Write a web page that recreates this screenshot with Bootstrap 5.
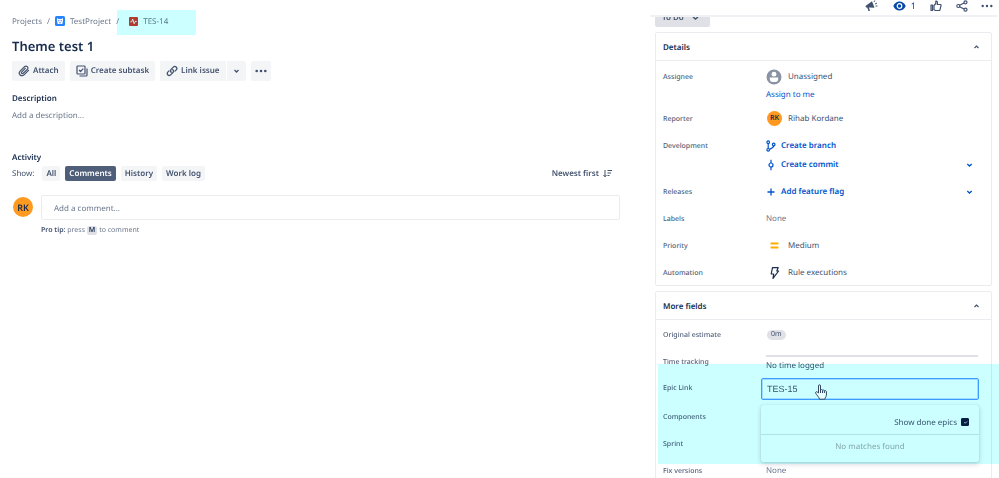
<!DOCTYPE html>
<html lang="en">
<head>
<meta charset="utf-8">
<meta name="viewport" content="width=device-width, initial-scale=1">
<title>TES-14 Theme test 1</title>
<link rel="stylesheet" href="https://cdn.jsdelivr.net/npm/bootstrap@5.3.0/dist/css/bootstrap.min.css">
<style>
  :root { --ink: #172b4d; --mid: #42526e; --soft: #6b778c; --blue: #0052cc; --line: #ebecf0; --tint: #ccffff; }
  body { font-family: "Noto Sans", "Open Sans", sans-serif; font-size: 8px; line-height: 15px; color: var(--mid); text-rendering: geometricPrecision; }
  button, input { text-rendering: inherit; }
  svg { display: block; flex: none; }
  a { color: inherit; text-decoration: none; }
  a:hover { text-decoration: underline; }
  .issue-main { padding: 11px 30px 12px 12px; min-width: 0; }
  .issue-side { flex: 0 0 349px; min-width: 0; }
  .crumbs { gap: 5px; height: 20px; color: var(--soft); }
  .crumbs a { gap: 5px; }
  .crumb-current { position: relative; padding-left: 5px; }
  .tint { position: absolute; background: var(--tint); mix-blend-mode: multiply; pointer-events: none; }
  .tint-crumb { left: -7px; top: -4px; width: 79px; height: 25px; }
  .issue-title { font-size: 13px; line-height: 20px; font-weight: 600; color: var(--ink); margin: 5px 0; }
  .tool { --bs-btn-font-size: 8px; --bs-btn-line-height: 20px; --bs-btn-padding-y: 0; --bs-btn-padding-x: 6px; --bs-btn-border-width: 0; --bs-btn-border-radius: 2px;
    --bs-btn-bg: #f4f5f7; --bs-btn-color: var(--mid); --bs-btn-hover-bg: #ebecf0; --bs-btn-hover-color: var(--mid);
    font-weight: 600; height: 20px; display: inline-flex; align-items: center; gap: 3px; }
  .pill { --bs-btn-line-height: 15px; --bs-btn-padding-x: 4px; height: 15px; }
  .pill-on { --bs-btn-bg: #505f79; --bs-btn-color: #fff; --bs-btn-hover-bg: #42526e; --bs-btn-hover-color: #fff; }
  .section-name { font-size: 8px; line-height: 15px; font-weight: 600; color: var(--ink); margin: 0; }
  .avatar { border-radius: 50%; background: #ff991f; color: var(--ink); font-weight: 600; display: flex; align-items: center; justify-content: center; flex: none; }
  .avatar-l { width: 20px; height: 20px; font-size: 9px; }
  .avatar-s { width: 15px; height: 15px; font-size: 7px; }
  .comment-box { font-size: 8px; line-height: 15px; height: 25px; padding: 5px 12px 3px; border-color: var(--line); border-radius: 2px; }
  .comment-box::placeholder { color: var(--soft); }
  .tip { font-size: 7px; color: var(--soft); }
  .tip b { font-weight: 600; color: var(--mid); }
  .tip kbd { background: #dfe1e6; color: var(--ink); font: inherit; font-weight: 600; line-height: 10px; padding: 0 2px; border-radius: 2px; }
  .icon-bar { height: 17px; margin-right: 2px; padding: 0 4px 4px 0; border-bottom: 2px solid #f0f1f4; color: var(--mid); }
  .plain { border: 0; background: none; padding: 0; color: inherit; font-weight: inherit; display: inline-flex; align-items: center; }
  .watch { gap: 5px; margin-right: 14px; color: #0747a6; font-size: 9px; }
  .side-scroll { overflow: hidden; padding: 0 7px 0 5px; flex: 1; min-height: 0; }
  .status { --bs-btn-bg: #dfe1e6; margin-top: -10px; gap: 8px; padding: 2px 11px 0 7px; flex: none; }
  .panel { --bs-card-border-color: var(--line); --bs-card-border-radius: 2px; margin-top: 5px; color: inherit; flex: none; }
  .panel-head { height: 28px; padding: 1px 11px 0 7px; border-bottom: 1px solid var(--line); }
  .panel-body { padding: 1px 12px 0 7px; }
  .field { padding: 4px 0; display: flex; line-height: 19px; min-height: 27px; }
  .field-first { padding: 5px 0 3px; }
  .field-name { flex: 0 0 103px; height: 19px; padding-top: 1px; font-size: 7px; font-weight: 500; color: #505f79; }
  .field-value { flex: 1; min-width: 0; }
  .line { display: flex; align-items: center; height: 19px; }
  .line-short { height: 16px; }
  .dev { color: var(--blue); font-weight: 600; gap: 5px; }
  .estimate { background: #dfe1e6; border-radius: 8px; padding: 0 4px; font-size: 7px; line-height: 10px; margin-left: 1px; }
  .track { height: 2px; background: #dfe1e6; margin: 3px 1px 0 0; }
  .time-field { height: 27px; }
  .epic-field { height: 28px; padding: 3px 0; }
  .epic { position: relative; margin-left: -5px; }
  .epic-input { height: 22px; padding: 0 5px; font: 9px/18px "Liberation Sans", Arial, sans-serif; border: 1px solid #4c9aff; box-shadow: inset 0 0 0 1px #4c9aff55; border-radius: 2px; color: var(--mid); }
  .epic-input:focus { border-color: #4c9aff; box-shadow: none; color: var(--mid); }
  .epic-menu { position: absolute; z-index: 2; left: 0; right: 0; top: 27px; background: #fff; border-radius: 2px; box-shadow: 0 0 1px #091e4240, 0 2px 5px #091e4233; }
  .epic-opt { height: 30px; padding: 5px 10px 0 0; border-bottom: 1px solid #dfe1e6; gap: 4px; }
  .epic-opt input { width: 8px; height: 8px; margin: 0; border-color: #091e42; }
  .epic-opt input[type=checkbox] { border-radius: 1px; }
  .epic-opt input:checked { background-color: #091e42; border-color: #091e42; background-size: 5px; }
  .epic-none { height: 27px; line-height: 24px; color: #a5a5a8; }
  .tint-side { z-index: 3; left: 2px; right: -8px; top: 72px; height: 100px; }
  .pointer { position: absolute; z-index: 4; left: 54px; top: 6px; }
</style>
<script src="https://cdn.jsdelivr.net/npm/bootstrap@5.3.0/dist/js/bootstrap.bundle.min.js"></script>
</head>
<body>
<div class="d-flex vh-100 overflow-hidden">
  <main class="issue-main flex-grow-1">
    <nav class="crumbs d-flex align-items-center" aria-label="Breadcrumb">
      <a href="#">Projects</a><span>/</span>
      <a href="#" class="d-flex align-items-center">
        <svg width="10" height="10" viewBox="0 0 10 10"><rect width="10" height="10" rx="1.5" fill="#2684ff"/><path d="M2 2l1.500 1h3L8 2v2.500L7.300 8H2.700L2 4.500z" fill="#fff"/><path d="M3.300 4.300h1v1h-1zM5.700 4.300h1v1h-1zM4.200 6.500h1.600v.7H4.200z" fill="#0052cc"/></svg>TestProject</a>
      <span>/</span>
      <span class="crumb-current"><a href="#" class="d-flex align-items-center">
        <svg width="9" height="9" viewBox="0 0 9 9"><rect width="9" height="9" rx="1" fill="#de3b2f"/><path d="M1.300 4.800h1.400l1-2.600 1.500 4.500 1-2.300h1.500" fill="none" stroke="#fff" stroke-width=".9"/></svg>TES-14</a><span class="tint tint-crumb"></span></span>
    </nav>
    <h1 class="issue-title">Theme test 1</h1>
    <div class="d-flex" style="gap:5px">
      <button class="btn tool"><svg width="12" height="12" viewBox="0 0 12 12" fill="none" stroke="currentColor" stroke-width="1.200" stroke-linecap="round"><path d="M10.500 5.300L6 9.900a2.700 2.700 0 0 1-3.900-3.800l4.700-4.600a1.900 1.900 0 0 1 2.700 2.600L5 8.500a1 1 0 0 1-1.400-1.400l3.700-3.700"/></svg>Attach</button>
      <button class="btn tool"><svg width="12" height="12" viewBox="0 0 12 12" fill="none" stroke="currentColor" stroke-width="1.200" stroke-linejoin="round"><rect x="1" y="1" width="8" height="8" rx=".8"/><path d="M3 5l1.500 1.500L7.300 3.600M11 3.500V10a1 1 0 0 1-1 1H3.500"/></svg>Create subtask</button>
      <div class="d-flex" style="gap:1px">
        <button class="btn tool rounded-end-0"><svg width="12" height="12" viewBox="0 0 12 12" fill="none" stroke="currentColor" stroke-width="1.300" stroke-linecap="round"><path d="M5.200 7.300a2 2 0 0 1-.1-2.900L7.300 2.100a2 2 0 0 1 2.900 2.800L9 6.100M6.800 4.700a2 2 0 0 1 .1 2.900L4.700 9.900a2 2 0 0 1-2.900-2.800L3 5.900"/></svg>Link issue</button>
        <button class="btn tool rounded-start-0" aria-label="More link options"><svg width="7" height="6" viewBox="0 0 7 6" fill="none" stroke="currentColor" stroke-width="1.300"><path d="M1.500 2l2 2 2-2"/></svg></button>
      </div>
      <button class="btn tool px-1" aria-label="More actions"><svg width="12" height="4" viewBox="0 0 12 4" fill="currentColor"><circle cx="1.700" cy="2" r="1.300"/><circle cx="6" cy="2" r="1.300"/><circle cx="10.300" cy="2" r="1.300"/></svg></button>
    </div>
    <h2 class="section-name" style="margin-top:10px">Description</h2>
    <p class="mb-0" style="margin-top:2px;color:var(--soft)">Add a description...</p>
    <h2 class="section-name" style="margin-top:27px">Activity</h2>
    <div class="d-flex align-items-center" style="gap:5px;margin-top:1px">
      <span style="margin-right:3px">Show:</span>
      <button class="btn tool pill">All</button>
      <button class="btn tool pill pill-on">Comments</button>
      <button class="btn tool pill">History</button>
      <button class="btn tool pill">Work log</button>
      <button class="plain ms-auto me-2 gap-1" style="font-weight:600">Newest first<svg width="9" height="9" viewBox="0 0 9 9" fill="none" stroke="currentColor"><path d="M2 1v7M.4 6L2 7.700 3.600 6M4.500 1.500H9M4.500 4H8M4.500 6.500H6.500"/></svg></button>
    </div>
    <div class="d-flex" style="gap:8px;margin-top:14px">
      <span class="avatar avatar-l" style="margin:2px 0 0 1px">RK</span>
      <div class="flex-grow-1">
        <input class="form-control comment-box" type="text" placeholder="Add a comment..." aria-label="Add a comment">
        <div class="tip" style="margin-top:3px"><b>Pro tip:</b> press <kbd>M</kbd> to comment</div>
      </div>
    </div>
  </main>

  <aside class="issue-side d-flex flex-column">
    <div class="icon-bar d-flex align-items-center justify-content-end">
      <button class="plain" style="margin-right:15px" aria-label="Feedback"><svg width="13" height="12" viewBox="0 0 13 12" fill="currentColor"><path d="M.5 6L7 1.300l2.500 6.500-5.500-.3L5 11H3.500L2.200 7.500H1z"/><path d="M9 2l.8-1.500M10 4l2-1M10.500 6h2" stroke="currentColor" fill="none"/></svg></button>
      <button class="plain watch" aria-label="Watchers: 1"><svg width="13" height="12" viewBox="0 0 13 12"><path d="M.3 6C1.500 3 4 1.500 6.500 1.500S11.500 3 12.700 6C11.500 9 9 10.500 6.500 10.500S1.500 9 .3 6z" fill="currentColor"/><circle cx="6.500" cy="6" r="2.300" fill="none" stroke="#fff" stroke-width="1.200"/></svg>1</button>
      <button class="plain" style="margin-right:14px" aria-label="Vote"><svg width="12" height="12" viewBox="0 0 12 12" fill="none" stroke="currentColor" stroke-width="1.200" stroke-linejoin="round"><path d="M1 5h1.500v5.500H1zM4 5.500L5.800 3.500V1.200c1.500-.2 2 .8 1.500 3.300h3c.7 0 .9.500.7 1.200L10 9.700c-.2.600-.5.800-1 .8H5.500L4 9.700z"/></svg></button>
      <button class="plain" style="margin-right:13px" aria-label="Share"><svg width="12" height="12" viewBox="0 0 12 12" fill="none" stroke="currentColor" stroke-width="1.200"><circle cx="9.500" cy="2.300" r="1.500"/><circle cx="2.300" cy="6" r="1.500"/><circle cx="9.500" cy="9.700" r="1.500"/><path d="M3.600 5.300l4.500-2.300M3.600 6.700l4.500 2.300"/></svg></button>
      <button class="plain" aria-label="Actions"><svg width="12" height="4" viewBox="0 0 12 4" fill="currentColor"><circle cx="1.700" cy="2" r="1.200"/><circle cx="6" cy="2" r="1.200"/><circle cx="10.300" cy="2" r="1.200"/></svg></button>
    </div>
    <div class="side-scroll d-flex flex-column">
      <button class="btn tool status align-self-start">To Do<svg width="7" height="6" viewBox="0 0 7 6" fill="none" stroke="currentColor" stroke-width="1.400"><path d="M1 2l2.500 2L6 2"/></svg></button>
      <section class="card panel">
        <div class="panel-head d-flex align-items-center justify-content-between">
          <h2 class="section-name">Details</h2>
          <button class="plain" aria-label="Collapse Details"><svg width="7" height="6" viewBox="0 0 7 6" fill="none" stroke="currentColor" stroke-width="1.200"><path d="M1.500 4l2-2 2 2"/></svg></button>
        </div>
        <div class="panel-body">
          <div class="field field-first"><span class="field-name">Assignee</span><div class="field-value">
            <div class="line" style="gap:6px"><svg width="16" height="16" viewBox="0 0 16 16"><circle cx="8" cy="8" r="7.500" fill="#8993a4"/><circle cx="8" cy="5.200" r="2.400" fill="#fff"/><path d="M3.800 8.500h8.400V10a3 3 0 0 1-3 3H6.800a3 3 0 0 1-3-3z" fill="#fff"/></svg>Unassigned</div>
            <div class="line line-short"><a href="#" style="color:#0052cc">Assign to me</a></div></div></div>
          <div class="field"><span class="field-name">Reporter</span><div class="field-value line" style="gap:6px"><span class="avatar avatar-s" style="margin-left:1px">RK</span>Rihab Kordane</div></div>
          <div class="field"><span class="field-name">Development</span><div class="field-value">
            <div class="line"><a href="#" class="line dev"><svg width="10" height="12" viewBox="0 0 10 12" fill="none" stroke="currentColor" stroke-width="1.200"><circle cx="2.200" cy="2.200" r="1.300"/><circle cx="2.200" cy="9.800" r="1.300"/><circle cx="7.700" cy="4.500" r="1.300"/><path d="M2.200 3.500v5M7.700 5.800c0 2-2 2.500-4.200 3.500"/></svg>Create branch</a></div>
            <div class="line justify-content-between"><a href="#" class="line dev"><svg width="10" height="12" viewBox="0 0 10 12" fill="none" stroke="currentColor" stroke-width="1.200"><circle cx="5" cy="6" r="2"/><path d="M5 .8V4M5 8v3.200"/></svg>Create commit</a>
              <button class="plain dev" style="margin-right:6px" aria-label="Commit options"><svg width="7" height="6" viewBox="0 0 7 6" fill="none" stroke="currentColor" stroke-width="1.300"><path d="M1.300 2l2.200 2 2.200-2"/></svg></button></div></div></div>
          <div class="field"><span class="field-name">Releases</span><div class="field-value line justify-content-between"><a href="#" class="line dev"><svg width="10" height="12" viewBox="0 0 10 12" fill="none" stroke="currentColor" stroke-width="1.300"><path d="M5 2.500v7M1.500 6h7"/></svg>Add feature flag</a>
              <button class="plain dev" style="margin-right:6px" aria-label="Feature flag options"><svg width="7" height="6" viewBox="0 0 7 6" fill="none" stroke="currentColor" stroke-width="1.300"><path d="M1.300 2l2.200 2 2.200-2"/></svg></button></div></div>
          <div class="field"><span class="field-name">Labels</span><div class="field-value" style="color:var(--soft)">None</div></div>
          <div class="field"><span class="field-name">Priority</span><div class="field-value line" style="gap:6px"><svg width="16" height="12" viewBox="0 0 16 12" fill="#ffab00"><rect x="4.500" y="2.500" width="8" height="2" rx=".4"/><rect x="4.500" y="6.500" width="8" height="2" rx=".4"/></svg>Medium</div></div>
          <div class="field" style="height:26px;min-height:0"><span class="field-name">Automation</span><div class="field-value line" style="gap:6px"><svg width="16" height="12" viewBox="0 0 16 12" fill="none" stroke="#172b4d" stroke-width="1.200" stroke-linejoin="round"><path d="M6.500.6h5.700L10.800 4h1.800L7 11.400l.7-4.400H5.200z"/></svg>Rule executions</div></div>
        </div>
      </section>
      <section class="card panel">
        <div class="panel-head d-flex align-items-center justify-content-between">
          <h2 class="section-name">More fields</h2>
          <button class="plain" aria-label="Collapse More fields"><svg width="7" height="6" viewBox="0 0 7 6" fill="none" stroke="currentColor" stroke-width="1.200"><path d="M1.500 4l2-2 2 2"/></svg></button>
        </div>
        <div class="panel-body">
          <div class="field"><span class="field-name">Original estimate</span><div class="field-value line"><span class="estimate">0m</span></div></div>
          <div class="field time-field"><span class="field-name">Time tracking</span><div class="field-value"><div class="track"></div><div class="line-short line">No time logged</div></div></div>
          <div class="field epic-field"><label class="field-name" for="epic">Epic Link</label><div class="field-value"><div class="epic">
            <input id="epic" class="form-control epic-input" type="text" value="TES-15">
            <svg class="pointer" width="12" height="16" viewBox="0 0 12 16" fill="#e8ffff" stroke="#344563" stroke-linejoin="round"><path d="M3.500 9V2c0-1.700 2-1.700 2 0v4c.5-.8 1.800-.6 2 .3.600-.6 1.600-.4 1.900.4.800-.5 2-.1 2 1v3.500c0 1.600-1.500 2.300-1.500 4H4.500C4.300 13.200 1.500 11 .6 9c-.4-1.200.9-1.600 1.600-1z"/><path d="M5.500 6v3M7.500 6.500V9M9.400 7v2" fill="none"/></svg>
            <div class="epic-menu">
              <div class="epic-opt d-flex align-items-center justify-content-end"><label for="done">Show done epics</label><input id="done" class="form-check-input" type="checkbox" checked></div>
              <div class="epic-none text-center">No matches found</div>
            </div></div></div></div>
          <div class="field"><span class="field-name">Components</span></div>
          <div class="field"><span class="field-name">Sprint</span></div>
          <div class="field"><span class="field-name">Fix versions</span><div class="field-value" style="color:var(--soft)">None</div></div>
        </div>
        <div class="tint tint-side"></div>
      </section>
    </div>
  </aside>
</div>
</body>
</html>
